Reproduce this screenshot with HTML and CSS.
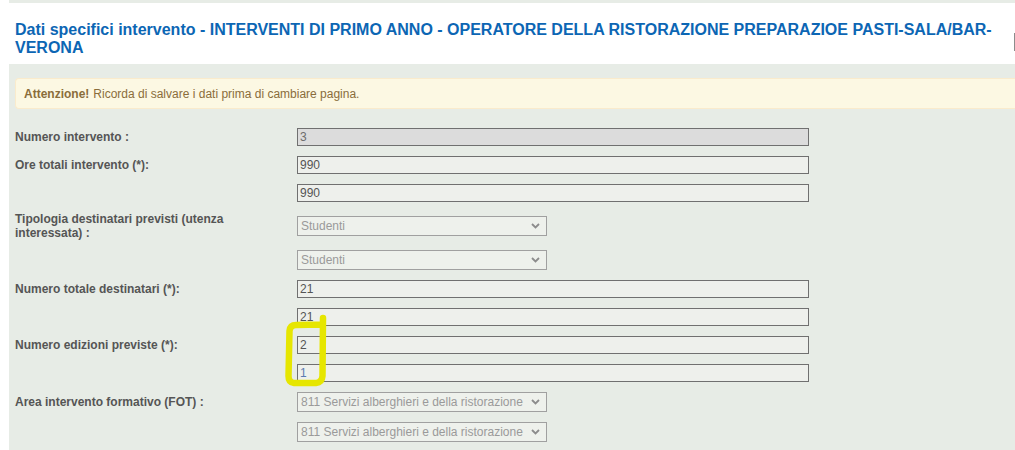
FILE: index.html
```html
<!DOCTYPE html>
<html lang="it">

<head>
  <meta charset="UTF-8">
  <title>Dati specifici intervento</title>
  <link rel="stylesheet" href="styles.css">
</head>

<body>
  <div class="page">
    <div class="topbar"></div>
    <header class="header">
      <h1 class="header__title">Dati specifici intervento - INTERVENTI DI PRIMO ANNO - OPERATORE DELLA RISTORAZIONE PREPARAZIOE PASTI-SALA/BAR-VERONA</h1>
      <div class="header__tool"></div>
    </header>

    <main class="panel">
      <div class="alert"><strong>Attenzione!</strong> Ricorda di salvare i dati prima di cambiare pagina.</div>

      <div class="row">
        <label class="row__label">Numero intervento :</label>
        <input type="text" class="field field_disabled" value="3" disabled>
      </div>
      <div class="row">
        <label class="row__label">Ore totali intervento (*):</label>
        <input type="text" class="field" value="990">
      </div>
      <div class="row">
        <label class="row__label"></label>
        <input type="text" class="field" value="990">
      </div>
      <div class="row">
        <label class="row__label">Tipologia destinatari previsti (utenza interessata) :</label>
        <div class="select">
          <span class="select__value">Studenti</span>
          <svg class="select__arrow" width="9" height="6" viewBox="0 0 9 6"><path d="M1 1 L4.5 4.5 L8 1" fill="none" stroke="#8c8c8c" stroke-width="1.8"/></svg>
        </div>
      </div>
      <div class="row">
        <label class="row__label"></label>
        <div class="select">
          <span class="select__value">Studenti</span>
          <svg class="select__arrow" width="9" height="6" viewBox="0 0 9 6"><path d="M1 1 L4.5 4.5 L8 1" fill="none" stroke="#8c8c8c" stroke-width="1.8"/></svg>
        </div>
      </div>
      <div class="row">
        <label class="row__label">Numero totale destinatari (*):</label>
        <input type="text" class="field" value="21">
      </div>
      <div class="row">
        <label class="row__label"></label>
        <input type="text" class="field" value="21">
      </div>
      <div class="row">
        <label class="row__label">Numero edizioni previste (*):</label>
        <input type="text" class="field" value="2">
      </div>
      <div class="row">
        <label class="row__label"></label>
        <input type="text" class="field field_changed" value="1">
      </div>
      <div class="row">
        <label class="row__label">Area intervento formativo (FOT) :</label>
        <div class="select">
          <span class="select__value">811 Servizi alberghieri e della ristorazione</span>
          <svg class="select__arrow" width="9" height="6" viewBox="0 0 9 6"><path d="M1 1 L4.5 4.5 L8 1" fill="none" stroke="#8c8c8c" stroke-width="1.8"/></svg>
        </div>
      </div>
      <div class="row">
        <label class="row__label"></label>
        <div class="select">
          <span class="select__value">811 Servizi alberghieri e della ristorazione</span>
          <svg class="select__arrow" width="9" height="6" viewBox="0 0 9 6"><path d="M1 1 L4.5 4.5 L8 1" fill="none" stroke="#8c8c8c" stroke-width="1.8"/></svg>
        </div>
      </div>
    </main>
  </div>

  <!-- evidenziatore disegnato a mano sopra la pagina -->
  <svg class="marker" width="1015" height="450" viewBox="0 0 1015 450">
    <path d="M323 318 L322.5 376 Q322 382.5 316 383 L294 383 Q288.5 382.5 288.5 376 L289.5 331 Q290 325 296 325 L321 324.5"
      fill="none" stroke="#e6e600" stroke-width="6.5" stroke-linecap="round" stroke-linejoin="round"/>
  </svg>
</body>

</html>
```

FILE: styles.css
```css
html,
body {
  margin: 0;
  font-family: "Liberation Sans", Arial, sans-serif;
  background-color: #fff;
  overflow: hidden;
}

.page {
  margin-left: 9px;
  height: 450px;
}

.topbar {
  height: 3px;
  background-color: #e7ece6;
}

.header {
  display: flex;
  align-items: flex-start;
}

.header__title {
  flex: 1;
  margin: 0;
  padding: 18px 6px 7px;
  font-size: 16px;
  line-height: 18px;
  font-weight: bold;
  color: #0c66b4;
}

.header__tool {
  width: 0;
  height: 18px;
  margin-top: 30px;
  border-left: 1px solid #8c8c8c;
}

.panel {
  background-color: #e7ece6;
  padding: 14px 0 8px 6px;
}

.alert {
  height: 31px;
  margin-bottom: 19px;
  padding: 0 8px;
  display: flex;
  align-items: center;
  box-sizing: border-box;
  background-color: #fcf8e3;
  border: 1px solid #faebcc;
  border-right: none;
  border-radius: 4px 0 0 4px;
  font-size: 12px;
  color: #8a6d3b;
}

.alert strong {
  margin-right: 4px;
}

.row {
  display: flex;
  align-items: center;
  margin-bottom: 10px;
}

.row__label {
  width: 262px;
  margin-right: 20px;
  font-size: 12px;
  line-height: 14px;
  font-weight: bold;
  color: #555;
}

.field {
  box-sizing: border-box;
  width: 512px;
  height: 18px;
  padding: 0 2px;
  border: 1px solid #707070;
  background-color: #eef0ec;
  font-family: inherit;
  font-size: 12px;
  color: #555;
}

.field_disabled {
  background-color: #dcdcdc;
  color: #6d6d6d;
}

.field_changed {
  color: #5a7bb0;
}

.select {
  box-sizing: border-box;
  width: 250px;
  height: 20px;
  padding: 0 6px 0 3px;
  display: flex;
  align-items: center;
  justify-content: space-between;
  border: 1px solid #a0a0a0;
  background-color: #eef1ec;
  font-size: 12px;
  color: #9a9a9a;
}

.select__arrow {
  flex-shrink: 0;
}

.marker {
  position: absolute;
  top: 0;
  left: 0;
  pointer-events: none;
}
```
